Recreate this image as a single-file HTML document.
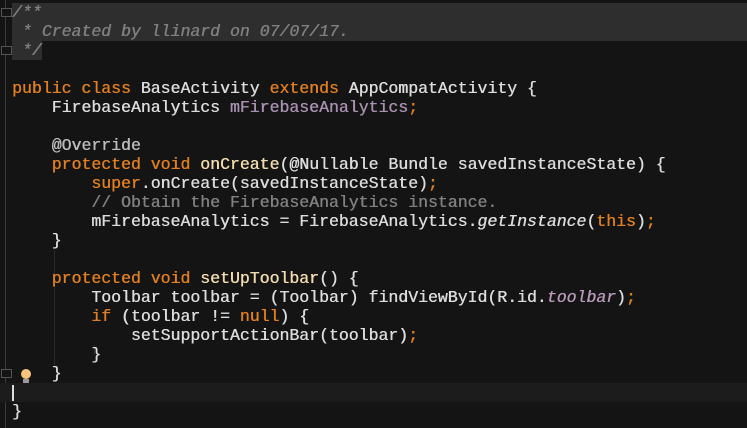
<!DOCTYPE html>
<html><head><style>
html,body{margin:0;padding:0;background:#141414;width:747px;height:428px;overflow:hidden}
.code{position:absolute;left:12px;top:3px;font-family:"Liberation Mono",monospace;font-size:16.5px;line-height:19px;color:#dcdcdc;white-space:pre;text-shadow:0.4px 0 0 currentColor}
.k{color:#e07e22}.c{color:#808080}.ci{color:#808080;font-style:italic}.f{color:#a890b0}.m{color:#f2dcae}.i{font-style:italic}.fi{color:#b898b8;font-style:italic}
.gut{position:absolute;left:5px;top:0;width:1px;height:428px;background:#3a3a3a}
.band{position:absolute;background:#2e2e2e}
.cur{position:absolute;left:0;top:383px;width:747px;height:19px;background:#1c1c1c}
.ig{position:absolute;width:1px;background:#2a2a2a}
.fold{position:absolute;left:1px;width:9px;height:7px;border:1px solid #555;background:#141414}
</style></head><body>
<div class="gut"></div>
<div class="band" style="left:12px;top:3px;width:735px;height:38px"></div>
<div class="band" style="left:12px;top:41px;width:30px;height:19px"></div>
<div class="cur"></div>
<div class="ig" style="left:54px;top:250px;height:115px"></div>
<div class="ig" style="left:94px;top:345px;height:10px"></div>
<div class="fold" style="top:8px"></div>
<div class="fold" style="top:46px"></div>
<div class="fold" style="top:369px"></div>
<div style="position:absolute;left:12px;top:385px;width:2px;height:16px;background:#ddd"></div>
<div style="position:absolute;left:21px;top:369px;width:10px;height:10px;border-radius:50%;background:#f6c47a"></div>
<div style="position:absolute;left:23px;top:379px;width:6px;height:4px;background:#999"></div>
<div class="code"><span class="ci">/**
 * Created by llinard on 07/07/17.
 */</span>

<span class="k">public class</span> BaseActivity <span class="k">extends</span> AppCompatActivity {
    FirebaseAnalytics <span class="f">mFirebaseAnalytics</span><span class="k">;</span>

    <span style="color:#bbb">@Override</span>
    <span class="k">protected void</span> <span class="m">onCreate</span>(@Nullable Bundle savedInstanceState) {
        <span class="k">super</span>.onCreate(savedInstanceState)<span class="k">;</span>
        <span class="c">// Obtain the FirebaseAnalytics instance.</span>
        mFirebaseAnalytics = FirebaseAnalytics.<span class="i">getInstance</span>(<span class="k">this</span>)<span class="k">;</span>
    }

    <span class="k">protected void</span> <span class="m">setUpToolbar</span>() {
        Toolbar toolbar = (Toolbar) findViewById(R.id.<span class="fi">toolbar</span>)<span class="k">;</span>
        <span class="k">if</span> (toolbar != <span class="k">null</span>) {
            setSupportActionBar(toolbar)<span class="k">;</span>
        }
    }

}</div>
</body></html>
